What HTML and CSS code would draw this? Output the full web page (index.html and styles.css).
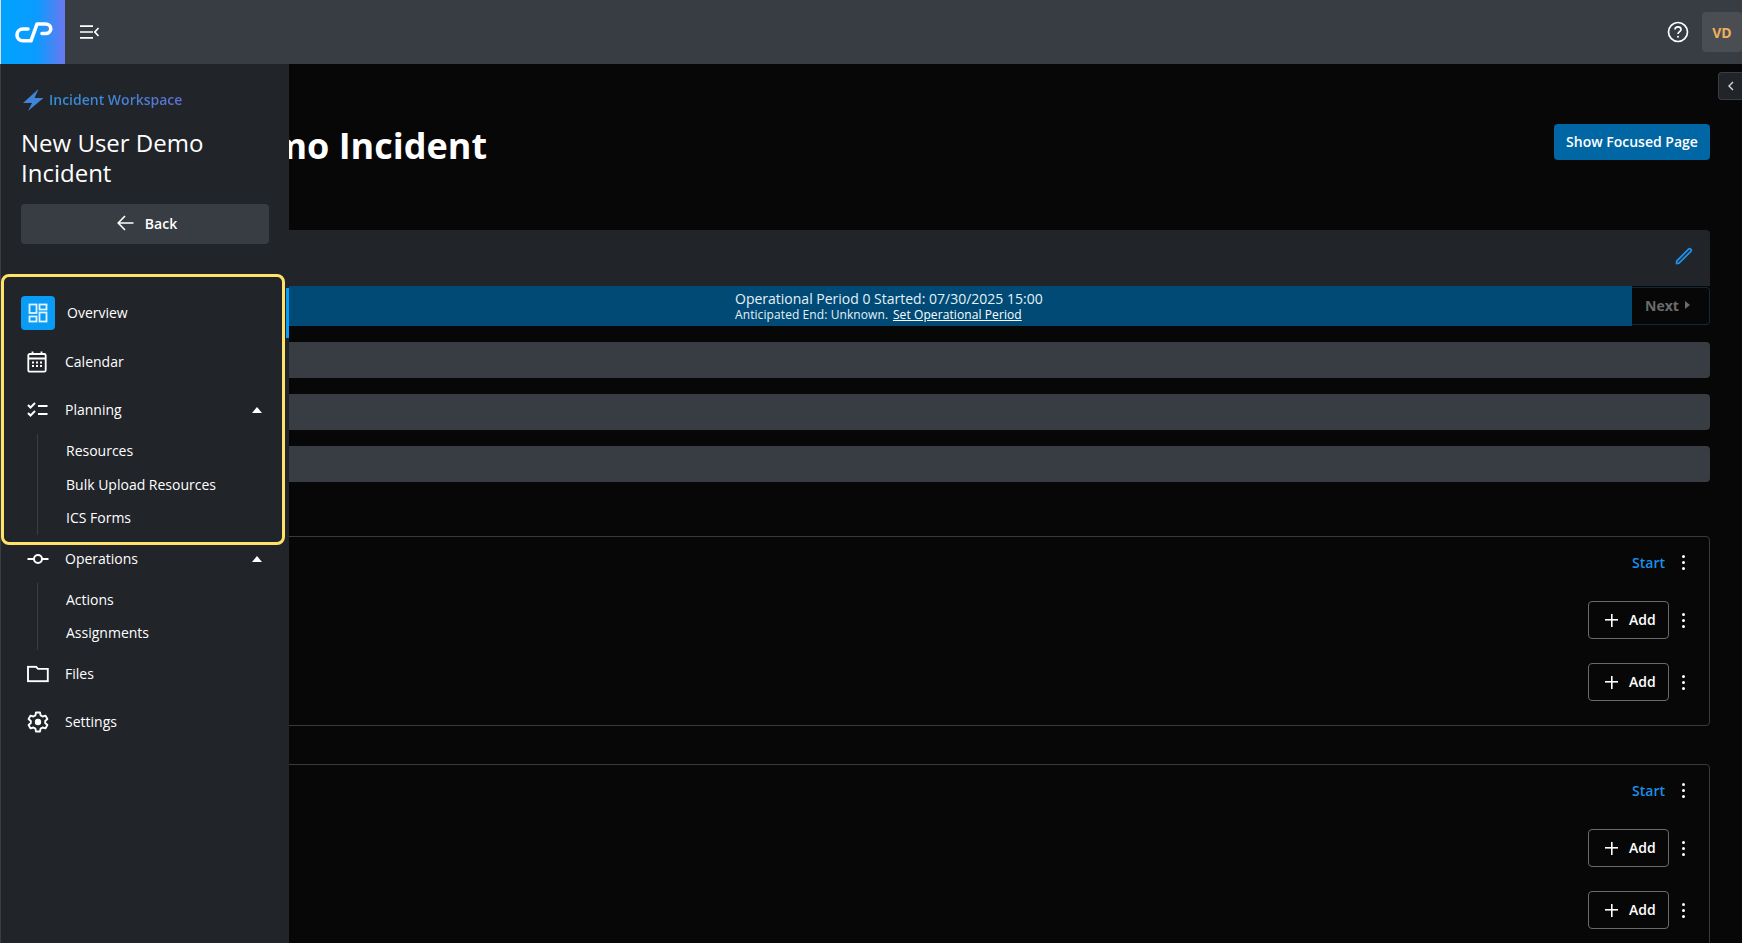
FILE: index.html
```html
<!DOCTYPE html>
<html lang="en">
<head>
<meta charset="utf-8">
<title>New User Demo Incident</title>
<link rel="stylesheet" href="styles.css">
</head>
<body>
<header class="topbar">
  <div class="logo">
    <svg width="38" height="21" viewBox="0 0 38 21" fill="none" stroke="#fff" stroke-width="3.6" stroke-linecap="round" stroke-linejoin="round">
      <path d="M13 7H8C4.5 7 2 9.5 2 13S4.5 18.8 8 18.8H16L22 2H30.5C33.5 2 35.8 4 35.8 6.7S33.5 11.5 30.5 11.5H27"/>
    </svg>
  </div>
  <button class="icon-btn menu-btn" aria-label="Toggle menu">
    <svg width="20" height="14" viewBox="0 0 20 14" fill="none" stroke="#fff" stroke-width="1.7">
      <path d="M0 1.2H13M0 7H13M0 12.8H13M18.5 3L14.8 7L18.5 11"/>
    </svg>
  </button>
  <div class="spacer"></div>
  <button class="icon-btn help-btn" aria-label="Help">
    <svg width="22" height="22" viewBox="0 0 22 22" fill="none" stroke="#fff" stroke-width="1.7">
      <circle cx="11" cy="11" r="9.5"/>
      <path d="M8 8.6C8 6.9 9.3 5.9 11 5.9S14 7 14 8.5C14 10.6 11 10.6 11 13"/>
      <circle cx="11" cy="15.8" r="1" fill="#fff" stroke="none"/>
    </svg>
  </button>
  <div class="avatar">VD</div>
</header>

<main class="main">
  <div class="title-row">
    <h1 class="page-title">New User Demo Incident</h1>
    <button class="focus-btn">Show Focused Page</button>
  </div>

  <section class="summary">
    <div class="summary-head">
      <svg width="18" height="18" viewBox="0 0 18 18" fill="none" stroke="#1e90e8" stroke-width="1.8" stroke-linejoin="round">
        <path d="M1.5 16.5L1.8 14L13.6 2.2C14.2 1.6 15 1.6 15.6 2.2L15.8 2.4C16.4 3 16.4 3.8 15.8 4.4L4 16.2Z"/>
      </svg>
    </div>
    <div class="period">
      <div class="period-info">
        <div class="period-title">Operational Period 0 Started: 07/30/2025 15:00</div>
        <div class="period-sub">Anticipated End: Unknown. <a href="#" class="period-link">Set Operational Period</a></div>
      </div>
      <div class="period-next">Next <span class="next-caret"></span></div>
    </div>
  </section>

  <div class="bars">
    <div class="bar"></div>
    <div class="bar"></div>
    <div class="bar"></div>
  </div>

  <section class="panel">
    <div class="panel-row panel-head">
      <span class="start">Start</span>
      <span class="kebab"><i></i><i></i><i></i></span>
    </div>
    <div class="panel-row">
      <button class="add-btn"><span class="plus"></span><span class="lifted">Add</span></button>
      <span class="kebab"><i></i><i></i><i></i></span>
    </div>
    <div class="panel-row">
      <button class="add-btn"><span class="plus"></span><span class="lifted">Add</span></button>
      <span class="kebab"><i></i><i></i><i></i></span>
    </div>
  </section>

  <section class="panel">
    <div class="panel-row panel-head">
      <span class="start">Start</span>
      <span class="kebab"><i></i><i></i><i></i></span>
    </div>
    <div class="panel-row">
      <button class="add-btn"><span class="plus"></span><span class="lifted">Add</span></button>
      <span class="kebab"><i></i><i></i><i></i></span>
    </div>
    <div class="panel-row">
      <button class="add-btn"><span class="plus"></span><span class="lifted">Add</span></button>
      <span class="kebab"><i></i><i></i><i></i></span>
    </div>
  </section>
</main>

<button class="collapse-tab" aria-label="Collapse">
  <svg width="8" height="10" viewBox="0 0 8 10" fill="none" stroke="#d8d8d8" stroke-width="1.4"><path d="M6 1L2 5L6 9"/></svg>
</button>

<aside class="sidebar">
  <div class="workspace">
    <svg width="21" height="22" viewBox="0 0 21 22" fill="#3f84d8">
      <path d="M15.5 0L0 14H9L5 22L20.5 9H11.5Z"/>
    </svg>
    <span class="workspace-label">Incident Workspace</span>
  </div>
  <div class="incident-name">New User Demo Incident</div>
  <button class="back-btn">
    <svg width="17" height="16" viewBox="0 0 17 16" fill="none" stroke="#fff" stroke-width="1.6">
      <path d="M16.5 8H1.5M8 1L1.2 8L8 15"/>
    </svg>
    Back
  </button>

  <div class="highlight">
    <a class="nav-item nav-active">
      <span class="nav-icon-active">
        <svg width="20" height="20" viewBox="0 0 20 20" fill="none" stroke="#e2f4ff" stroke-width="1.8">
          <rect x="1.5" y="1.5" width="7" height="8.5"/>
          <rect x="11.5" y="1.5" width="7" height="5"/>
          <rect x="1.5" y="13.5" width="7" height="5"/>
          <rect x="11.5" y="9.5" width="7" height="9"/>
        </svg>
      </span>
      <span class="lifted">Overview</span>
    </a>
    <a class="nav-item nav-calendar">
      <svg class="nav-icon" width="20" height="22" viewBox="0 0 20 22" fill="none" stroke="#fff" stroke-width="1.8">
        <rect x="1.3" y="3" width="17.4" height="17.7" rx="1.5"/>
        <path d="M1.3 7.5H18.7M5.5 0.5V3.5M14.5 0.5V3.5"/>
        <path d="M5 11.5H7M9 11.5H11M13 11.5H15M5 15H7M9 15H11M13 15H15" stroke-width="1.8"/>
      </svg>
      <span class="lifted">Calendar</span>
    </a>
    <a class="nav-item nav-planning">
      <svg class="nav-icon" width="22" height="16" viewBox="0 0 22 16" fill="none" stroke="#fff" stroke-width="2">
        <path d="M1 3L3.5 5.5L8 1M1 11L3.5 13.5L8 9M11 4H20.5M11 12H20.5"/>
      </svg>
      <span class="lifted">Planning</span>
      <span class="caret-up"></span>
    </a>
    <div class="subnav subnav-planning">
      <a class="sub-item">Resources</a>
      <a class="sub-item">Bulk Upload Resources</a>
      <a class="sub-item">ICS Forms</a>
    </div>
  </div>

  <a class="nav-item nav-operations">
    <svg class="nav-icon" width="22" height="12" viewBox="0 0 22 12" fill="none" stroke="#fff" stroke-width="2">
      <circle cx="11" cy="6" r="4"/>
      <path d="M0.5 6H7M15 6H21.5"/>
    </svg>
    <span class="lifted">Operations</span>
    <span class="caret-up"></span>
  </a>
  <div class="subnav subnav-operations">
    <a class="sub-item">Actions</a>
    <a class="sub-item">Assignments</a>
  </div>
  <a class="nav-item nav-files">
    <svg class="nav-icon" width="22" height="17" viewBox="0 0 22 17" fill="none" stroke="#fff" stroke-width="1.9">
      <path d="M1 1.2H9L11 3.4H20.8V15.8H1Z"/>
    </svg>
    <span class="lifted">Files</span>
  </a>
  <a class="nav-item nav-settings">
    <svg class="nav-icon" width="22" height="22" viewBox="0 0 22 22" fill="none" stroke="#fff" stroke-width="1.9" stroke-linejoin="round">
      <path d="M9 1.5H13L13.6 4.4L15.6 5.5L18.4 4.6L20.4 8L18.2 10V12L20.4 14L18.4 17.4L15.6 16.5L13.6 17.6L13 20.5H9L8.4 17.6L6.4 16.5L3.6 17.4L1.6 14L3.8 12V10L1.6 8L3.6 4.6L6.4 5.5L8.4 4.4Z"/>
      <circle cx="11" cy="11" r="3.2" fill="#fff" stroke="none"/>
    </svg>
    <span class="lifted">Settings</span>
  </a>
  <span class="active-strip"></span>
</aside>
</body>
</html>
```
FILE: styles.css
```css
* { box-sizing: border-box; }
html, body { margin: 0; height: 100%; }
body {
  height: 943px;
  overflow: hidden;
  background: #070707;
  color: #fff;
  font-family: "Open Sans", "Noto Sans", sans-serif;
  font-size: 14px;
  position: relative;
}
button { font-family: inherit; cursor: pointer; }
a { color: inherit; text-decoration: none; }
.lifted { margin-bottom: 2px; }

.topbar {
  display: flex;
  align-items: center;
  height: 64px;
  background: #383c43;
}
.logo {
  display: flex;
  align-items: center;
  justify-content: center;
  width: 65px;
  height: 64px;
  padding-left: 1px;
  border-left: 1px solid #d9dde2;
  background: linear-gradient(90deg, #00a3ff 0%, #0a9cff 55%, #6a78f0 100%);
}
.icon-btn {
  display: flex;
  align-items: center;
  justify-content: center;
  background: none;
  border: 0;
  padding: 0;
}
.menu-btn { width: 20px; margin-left: 15px; }
.spacer { flex: 1; }
.help-btn { margin-right: 13px; }
.avatar {
  display: flex;
  align-items: center;
  justify-content: center;
  width: 40px;
  height: 40px;
  border-radius: 4px;
  background: #4a4d52;
  color: #eeb05e;
  font-weight: 700;
  font-size: 14px;
}

.main { padding: 0 32px 0 41px; }
.title-row {
  display: flex;
  align-items: flex-start;
  justify-content: space-between;
  height: 166px;
  padding-top: 60px;
}
.page-title {
  margin: 0;
  font-size: 36px;
  line-height: 44px;
  font-weight: 700;
}
.focus-btn {
  height: 36px;
  width: 156px;
  padding: 0 0 2px;
  border: 0;
  border-radius: 4px;
  background: #0066a4;
  color: #fff;
  font-size: 14px;
  font-weight: 600;
}

.summary { background: #212429; border-radius: 4px 4px 0 0; }
.summary-head {
  display: flex;
  align-items: flex-start;
  justify-content: flex-end;
  height: 56px;
  padding: 17px 17px 0 0;
}
.period {
  display: flex;
  height: 40px;
  background: #070707;
}
.period-info {
  flex: 1;
  background: #004a75;
  padding-left: 694px;
  color: #e4f1fa;
}
.period-title { font-size: 14px; line-height: 17px; margin-top: 4px; }
.period-sub { font-size: 12px; line-height: 15px; letter-spacing: 0.09px; }
.period-link { margin-left: 1.5px; text-decoration: underline; color: #fff; }
.period-next {
  display: flex;
  align-items: center;
  width: 78px;
  height: 38px;
  margin-top: 1px;
  padding: 0 0 2px 13px;
  border: 1px solid #12293a;
  border-left: 0;
  border-radius: 0 4px 4px 0;
  color: #6b6b6b;
  font-weight: 700;
  font-size: 14px;
}
.next-caret {
  margin-left: 6px;
  border-left: 5px solid #6b6b6b;
  border-top: 4.5px solid transparent;
  border-bottom: 4.5px solid transparent;
}

.bars {
  display: flex;
  flex-direction: column;
  gap: 16px;
  margin-top: 16px;
  margin-bottom: 54px;
}
.bar { height: 36px; background: #383c43; border-radius: 4px; }

.panel {
  height: 190px;
  margin-bottom: 38px;
  padding: 0 20px 0 0;
  border: 1px solid #3a3a3a;
  border-radius: 4px;
}
.panel-row {
  display: flex;
  align-items: center;
  justify-content: flex-end;
  gap: 8px;
  height: 38px;
  margin-bottom: 24px;
}
.panel-head { height: 26px; margin-top: 12px; margin-bottom: 26px; gap: 12px; }
.start { color: #1a90e6; font-weight: 600; font-size: 14px; }
.kebab {
  display: flex;
  flex-direction: column;
  align-items: center;
  justify-content: center;
  gap: 3px;
  width: 12px;
}
.kebab i {
  display: block;
  width: 3px;
  height: 3px;
  border-radius: 50%;
  background: #fff;
}
.add-btn {
  display: flex;
  align-items: center;
  width: 81px;
  height: 38px;
  padding: 0 0 0 16px;
  border: 1px solid #6a6a6a;
  border-radius: 4px;
  background: transparent;
  color: #fff;
  font-size: 14px;
  font-weight: 600;
}
.plus {
  display: block;
  width: 13px;
  height: 13px;
  margin-right: 11px;
  background:
    linear-gradient(#fff, #fff) center / 100% 1.6px no-repeat,
    linear-gradient(#fff, #fff) center / 1.6px 100% no-repeat;
}

.collapse-tab {
  position: absolute;
  top: 72px;
  right: 0;
  display: flex;
  align-items: center;
  justify-content: center;
  width: 24px;
  height: 28px;
  padding: 0;
  border: 1px solid #3a3d42;
  border-right: 0;
  border-radius: 4px 0 0 4px;
  background: #212429;
}

.sidebar {
  position: absolute;
  top: 64px;
  left: 0;
  bottom: 0;
  width: 289px;
  border-left: 1px solid #3a3d42;
  background: #212429;
  padding: 24px 19px 0 20px;
}
.workspace {
  display: flex;
  align-items: center;
  gap: 5px;
  margin-left: 2px;
  height: 23px;
}
.workspace-label {
  font-size: 14px;
  font-weight: 600;
  background: linear-gradient(90deg, #2f93d9, #5b72d2);
  -webkit-background-clip: text;
  background-clip: text;
  color: transparent;
}
.incident-name {
  margin-top: 17px;
  font-size: 24px;
  line-height: 30px;
  width: 230px;
}
.back-btn {
  display: flex;
  align-items: center;
  justify-content: center;
  gap: 11px;
  width: 248px;
  height: 40px;
  margin-top: 16px;
  padding: 0 0 2px 4px;
  border: 0;
  border-radius: 4px;
  background: #383c43;
  color: #fff;
  font-size: 14px;
  font-weight: 600;
}
.highlight {
  width: 284px;
  height: 271px;
  margin: 30px 0 0 -20px;
  padding: 19px 0 0 17px;
  border: 3px solid #ffe26a;
  border-radius: 8px;
}
.nav-item {
  position: relative;
  display: flex;
  align-items: center;
  font-size: 14px;
  color: #fff;
}
.nav-icon { position: absolute; left: 6px; top: 50%; transform: translateY(-50%); }
.nav-active { height: 34px; gap: 12px; }
.nav-icon-active {
  display: flex;
  align-items: center;
  justify-content: center;
  width: 34px;
  height: 34px;
  border-radius: 4px;
  background: #0a9cf5;
}
.nav-calendar, .nav-planning, .nav-operations, .nav-files, .nav-settings {
  padding-left: 44px;
  height: 30px;
}
.nav-calendar { margin-top: 17px; }
.nav-planning { margin-top: 18px; width: 244px; }
.nav-operations { margin-top: -1px; width: 244px; }
.caret-up {
  position: absolute;
  right: 3px;
  top: 12px;
  border-left: 5.5px solid transparent;
  border-right: 5.5px solid transparent;
  border-bottom: 6px solid #fff;
}
.subnav {
  position: relative;
  padding-left: 45px;
}
.subnav::before {
  content: "";
  position: absolute;
  left: 16px;
  top: 0;
  bottom: 0;
  width: 1px;
  background: #3a3d42;
}
.sub-item { display: flex; align-items: center; height: 33.5px; font-size: 14px; color: #fff; }
.subnav-planning { margin-top: 9px; height: 101px; }
.subnav-operations { margin-top: 9px; height: 67px; }
.subnav-operations .sub-item { height: 33px; }
.nav-files { margin-top: 9px; }
.nav-settings { margin-top: 18px; }
.active-strip {
  position: absolute;
  right: 0;
  top: 224px;
  width: 3px;
  height: 50px;
  background: #0a9cf5;
}
```
